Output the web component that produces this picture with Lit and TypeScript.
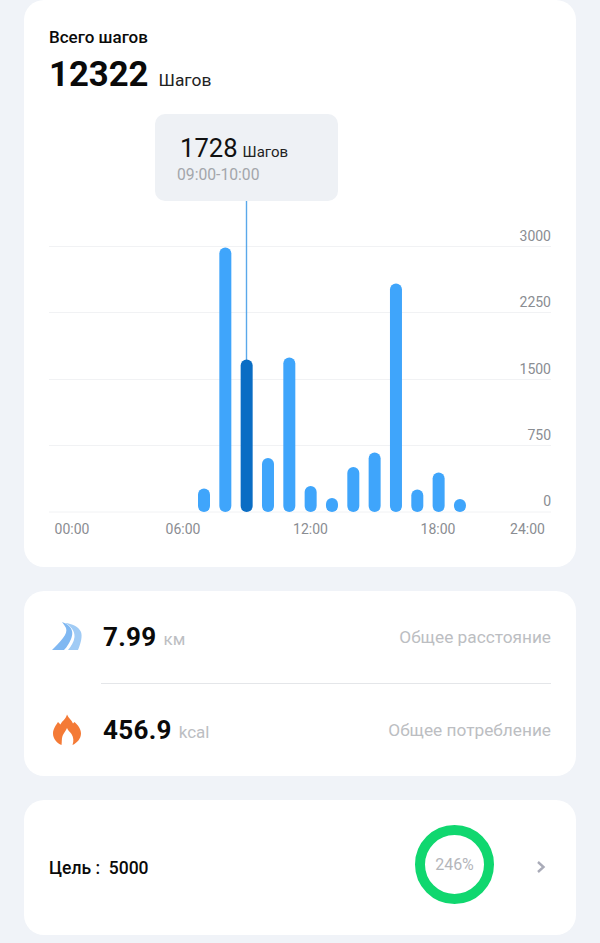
import { LitElement, html, css, svg } from "lit";
import { customElement } from "lit/decorators.js";

const BARS: [number, boolean?][] = [
  [488.5], [247.5], [359.5, true], [458], [357.5], [486], [498], [467], [452.5], [283.5], [489.5], [472.5], [499],
];
const GRID = [
  { y: 246.5, label: "3000" },
  { y: 312.5, label: "2250" },
  { y: 379.5, label: "1500" },
  { y: 445.5, label: "750" },
  { y: 512, label: "0" },
];
const XL = [
  { x: 72, t: "00:00" },
  { x: 183, t: "06:00" },
  { x: 310.5, t: "12:00" },
  { x: 438, t: "18:00" },
  { x: 527.5, t: "24:00" },
];

@customElement("app-root")
export class AppRoot extends LitElement {
  static styles = css`
    :host {
      display: block;
      width: 600px;
      height: 943px;
      overflow: hidden;
      background: #f0f3f8;
      font-family: Roboto, "Noto Sans", sans-serif;
      color: #0a0a0a;
    }
    .page {
      display: flex;
      flex-direction: column;
      gap: 24px;
      padding: 0 24px;
    }
    .card {
      background: #fff;
      border-radius: 20px;
    }
    .main {
      height: 567px;
      position: relative;
      padding: 28px 25px 0;
      box-sizing: border-box;
    }
    .title {
      font-size: 17px;
      line-height: 18px;
      font-weight: 500;
    }
    .total {
      display: flex;
      align-items: baseline;
      margin-top: 7px;
      line-height: 42px;
    }
    .total b {
      font-size: 34.7px;
      font-weight: 700;
    }
    .total span {
      font-size: 17.4px;
      margin-left: 10px;
      color: #222;
    }
    .chart {
      position: absolute;
      left: 0;
      top: 0;
      display: block;
    }
    .tip {
      position: absolute;
      left: 131px;
      top: 114px;
      width: 183px;
      height: 87px;
      box-sizing: border-box;
      padding: 18px 0 0 22px;
      background: #eef1f5;
      border-radius: 10px;
    }
    .tip-top {
      display: flex;
      align-items: baseline;
      padding-left: 3px;
      line-height: 32px;
    }
    .tip-top b {
      font-size: 25.6px;
      font-weight: 400;
      color: #111;
    }
    .tip-top span {
      font-size: 15px;
      margin-left: 5px;
      color: #222;
    }
    .tip-sub {
      font-size: 15.7px;
      line-height: 20px;
      color: #a3a6ab;
      margin-top: -3px;
    }
    .stats {
      height: 185px;
      box-sizing: border-box;
      padding: 0 25px 0 27px;
      display: flex;
      flex-direction: column;
    }
    .row {
      height: 92.5px;
      display: flex;
      align-items: center;
    }
    .row + .row {
      border-top: 1px solid #e4e6e9;
      margin-left: 50px;
    }
    .row + .row svg {
      margin-left: -50px;
    }
    .icon {
      width: 32px;
      height: 32px;
      flex: none;
      margin-right: 20px;
      display: block;
    }
    .val {
      font-size: 26px;
      font-weight: 700;
      letter-spacing: 0.3px;
    }
    .unit {
      font-size: 17px;
      margin-left: 7px;
      color: #bcbec2;
      position: relative;
      top: 2px;
    }
    .desc {
      margin-left: auto;
      font-size: 17.25px;
      color: #bcbec2;
    }
    .goal {
      height: 135px;
      box-sizing: border-box;
      padding: 0 25px;
      display: flex;
      align-items: center;
    }
    .goal-text {
      font-size: 17.5px;
      font-weight: 500;
      white-space: pre;
    }
    .ring {
      margin-left: auto;
      margin-bottom: 7px;
      width: 79px;
      height: 79px;
      box-sizing: border-box;
      border: 10px solid #10d76f;
      border-radius: 50%;
      display: flex;
      align-items: center;
      justify-content: center;
      font-size: 16px;
      color: #b4b6bb;
    }
    .chev {
      margin: 0 5px 2px 42px;
      display: block;
    }
  `;

  render() {
    return html`<div class="page">
      <div class="card main">
        <svg class="chart" width="552" height="567" viewBox="24 0 552 567">
          ${GRID.map(
            (g) => svg`<line x1="49" x2="551" y1=${g.y} y2=${g.y} stroke="#f1f2f4" />
              <text x="551" y=${g.y - 6} text-anchor="end" font-size="14" fill="#8a8d92">${g.label}</text>`
          )}
          <line x1="246.5" x2="246.5" y1="201" y2="360" stroke="#5aa8ea" stroke-width="1.4" />
          ${BARS.map(([top, active], i) => {
            const x = 198 + i * 21.33;
            return svg`<rect x=${x} y=${top} width="12" height=${512 - top} rx="6" fill=${active ? "#0a6dc4" : "#3fa5fb"} />`;
          })}
          ${XL.map(
            (l) => svg`<text x=${l.x} y="534" text-anchor="middle" font-size="14" fill="#8a8d92">${l.t}</text>`
          )}
        </svg>
        <div class="title">Всего шагов</div>
        <div class="total"><b>12322</b><span>Шагов</span></div>
        <div class="tip">
          <div class="tip-top"><b>1728</b><span>Шагов</span></div>
          <div class="tip-sub">09:00-10:00</div>
        </div>
      </div>

      <div class="card stats">
        <div class="row">
          <svg class="icon" viewBox="0 0 32 32">
            <path fill="#80b8f2" d="M1 29C5 25 9 21 12 17C15 13 16 10 15 7C14 5 12.500 3 11 1C16 2.500 20 6 21 10C22 14 20 19 17.500 23C16 25.500 14.500 27.500 13 29Z" />
            <path fill="#a0cbf5" d="M17 29C20 25.500 23 21 23.500 16C24 10 20 5 14 2C21 2.500 28 6 30 11C31.500 15 30 22 27 29Z" />
          </svg>
          <span class="val">7.99</span><span class="unit">км</span>
          <span class="desc">Общее расстояние</span>
        </div>
        <div class="row">
          <svg class="icon" viewBox="0 0 32 32">
            <path fill="#f47a36" d="M16 0.500C17.500 4 20.500 6 22 9.500L23.500 8C27 11 30 15 30 19.500C30 24.500 26 29 21.500 31C23 27 22.500 23 20.500 20C19 18 17 16.500 16 14C15 17 12.500 19 11.500 22C10.500 25 11 28.500 10.500 31C6 29 2 25 2 19.500C2 15 5 11 7 8L9.500 10.500C11 7 15 5 16 0.500Z" />
          </svg>
          <span class="val">456.9</span><span class="unit">kcal</span>
          <span class="desc">Общее потребление</span>
        </div>
      </div>

      <div class="card goal">
        <span class="goal-text">Цель :  5000</span>
        <div class="ring">246%</div>
        <svg class="chev" width="10" height="14" viewBox="0 0 10 14">
          <path d="M2 2L7.500 7L2 12" fill="none" stroke="#a9abb8" stroke-width="2.400" />
        </svg>
      </div>
    </div>`;
  }
}
